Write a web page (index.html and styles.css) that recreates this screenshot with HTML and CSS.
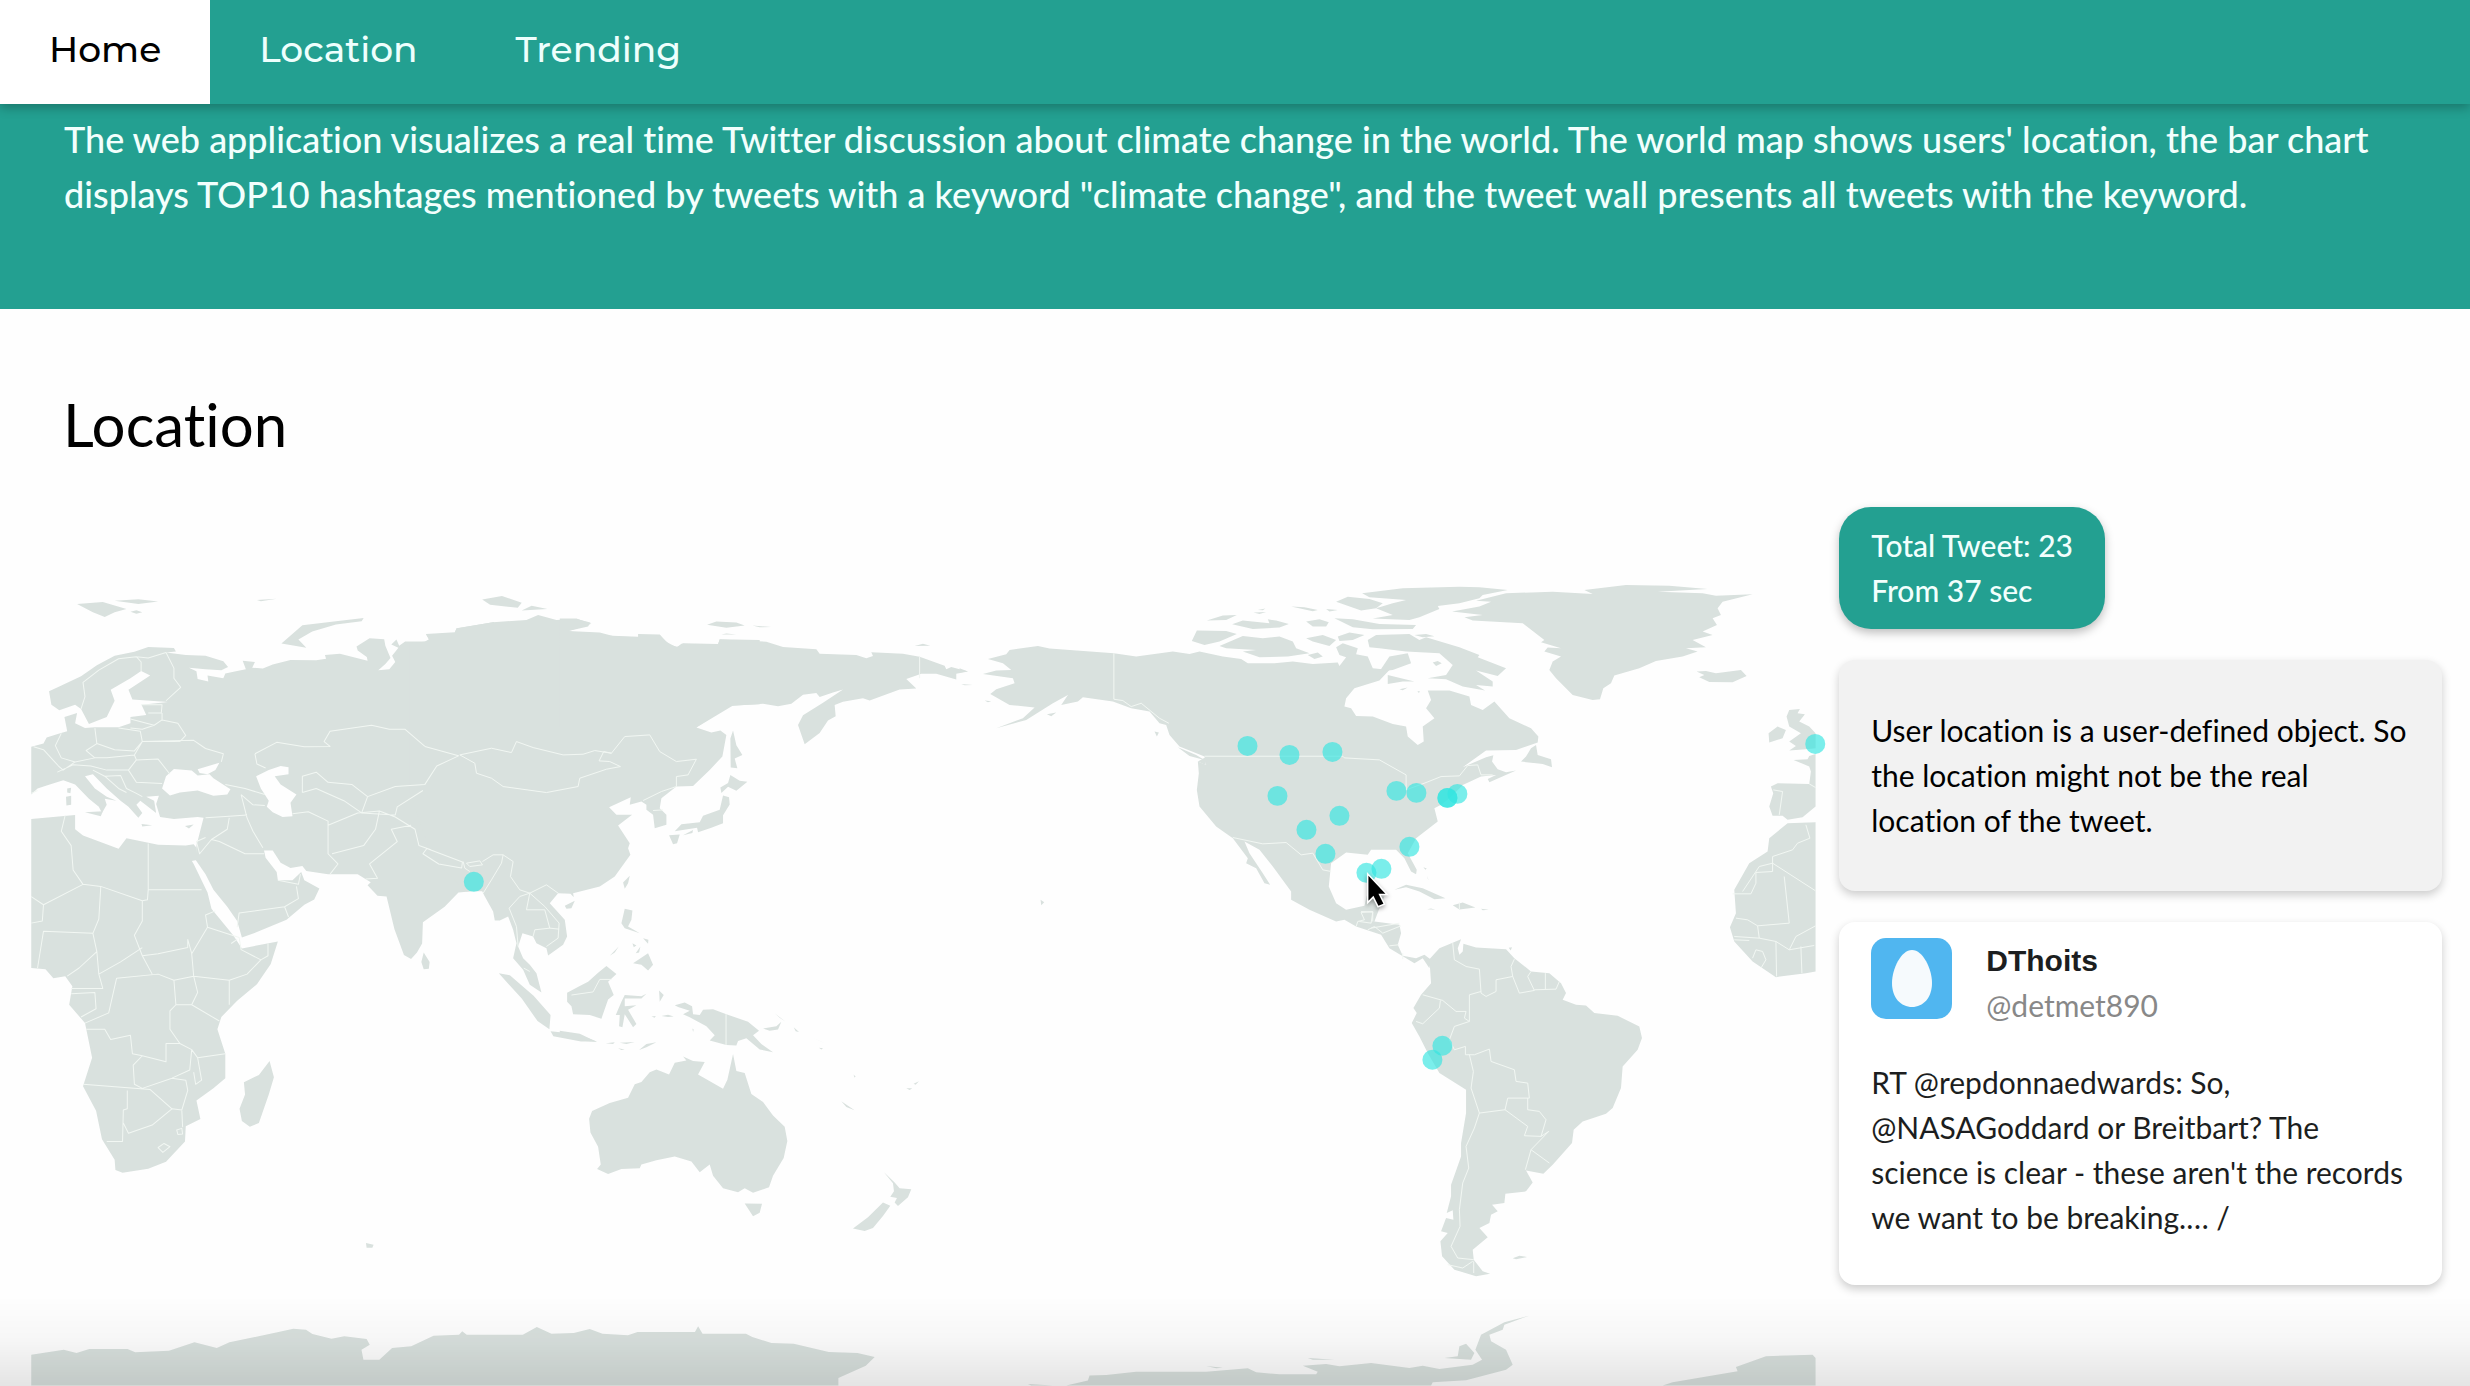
FILE: index.html
```html
<!DOCTYPE html>
<html lang="en">
<head>
<meta charset="utf-8">
<title>Climate change on Twitter</title>
<meta name="viewport" content="width=device-width, initial-scale=1">
<link rel="stylesheet" href="styles.css">
</head>
<body>
<nav class="nav">
  <a class="tab tab-active" href="#home">Home</a>
  <a class="tab" href="#location">Location</a>
  <a class="tab" href="#trending">Trending</a>
</nav>
<header class="hero" id="home">
  <p>The web application visualizes a real time Twitter discussion about climate change in the world. The world map shows users' location, the bar chart displays TOP10 hashtages mentioned by tweets with a keyword "climate change", and the tweet wall presents all tweets with the keyword.</p>
</header>
<main class="section" id="location">
  <h1>Location</h1>
  <div class="columns">
    <svg class="map" viewBox="31 507 1785 879" role="img" aria-label="World map of tweet locations">
      <g class="land">
        <!-- Europe, Africa, west Asia -->
        <g transform="translate(0 560) scale(.3954 .4082)">
          <path d="M124 322L150 310 205 285 245 258 290 235 340 225 375 213 440 216 445 224 420 227 470 233 520 235 565 248 577 262 560 270 520 268 478 264 497 273 500 292 527 298 525 283 565 290 570 278 600 272 622 268 614 247 645 250 638 264 665 266 690 256 735 245 800 246 825 242 822 233 860 230 930 247 928 238 905 222 902 212 935 192 972 194 975 210 988 240 975 255 957 270 985 268 1000 250 992 235 1008 215 990 207 1003 195 1010 210 1025 200 1075 200 1085 195 1078 182 1150 180 1155 168 1250 152V820L1225 822 1222 812 1195 812 1160 815 1125 850 1070 888 1068 940 1055 962 1040 978 1022 968 998 905 978 825 955 823 930 797 938 790 905 770 830 770 775 762 765 750 735 755 710 742 690 712 668 712 672 730 700 765 703 785 740 785 762 765 770 785 808 805 795 832 770 845 725 882 650 912 612 925 600 885 575 850 540 808 520 770 495 735 497 700 515 632 500 630 440 635 405 630 395 598 402 578 370 580 390 590 395 620 355 590 345 600 360 620 350 632 325 605 305 590 270 560 235 525 215 530 240 560 270 580 295 590 265 585 270 600 258 620 250 605 225 585 190 550 160 540 120 552 95 560 79 575V458L110 450 118 435 150 425 170 420 163 385 195 375 190 400 215 412 240 410 300 410 330 400 330 385 370 380 358 355 425 348 335 342 325 318 380 283 357 272 330 290 280 318 290 345 270 385 225 402 205 365 190 355 150 368 130 355Z"/>
          <path d="M79 635L190 625 190 660 210 675 300 708 320 682 400 698 470 700 490 697 497 705 497 735 485 738 470 712 490 745 525 815 535 855 590 920 612 952 703 935 685 990 650 1040 600 1080 560 1120 550 1150 570 1210 570 1270 540 1295 497 1325 507 1370 470 1388 468 1425 420 1475 375 1492 310 1502 292 1495 290 1470 258 1420 243 1350 210 1290 233 1220 215 1135 175 1090 183 1045 165 1020 135 1025 115 1003 79 1000Z"/>
          <path d="M682 1228L693 1268 680 1310 655 1380 632 1389 612 1375 606 1345 620 1310 617 1280 655 1262ZM712 205L765 160 850 150 920 142 915 150 850 158 790 175 755 195 775 215ZM195 108L260 103 320 120 290 128 265 140 235 128ZM290 100L350 96 400 102 350 108ZM330 127L345 123 360 128 345 132ZM650 98L700 95 660 101ZM1220 97L1270 88 1320 105 1310 117 1240 110ZM1320 124L1345 112 1385 120ZM1072 962L1087 985 1085 1002 1072 1003 1066 985ZM215 618L260 616 255 628ZM167 580L180 578 180 600 168 602ZM170 560L180 558 178 572 170 570ZM358 647L385 650 360 653ZM468 652L490 648 478 658Z"/>
          <path d="M1262 1013L1290 1018 1350 1068 1393 1115 1390 1150 1360 1130 1320 1075ZM1393 1155L1460 1162 1510 1180 1470 1180 1400 1167Z"/>
        </g>
        <!-- Central and south-east Asia -->
        <g transform="translate(300 560) scale(.33333)">
          <path d="M330 250L380 245 388 238 378 222 465 217 470 205 580 187 680 180 715 165 770 180 830 177 872 188 865 200 805 213 900 218 945 230 1015 232 1015 222 1080 224 1098 245 1130 262 1150 250 1255 252 1260 238 1380 240V433L1300 437 1190 503 1235 518 1262 512 1280 525 1268 590 1230 630 1180 678 1130 680 1085 715 1080 745 1100 765 1100 795 1065 805 1060 765 1040 750 1040 735 1025 725 990 735 993 712 928 742 950 765 997 765 955 797 990 850 985 865 992 885 945 950 900 980 820 1000 822 1012 812 1002 775 1000 750 1030 795 1080 802 1130 790 1155 745 1187 740 1165 710 1150 700 1130 668 1120 655 1160 670 1195 690 1215 710 1240 725 1298 690 1275 670 1230 640 1195 650 1150 640 1110 625 1070 600 1082 585 1082 580 1055 555 1010 545 990 500 995 400 900 330 700Z"/>
          <path d="M795 1038L825 1023 815 1045 800 1047ZM990 948L985 970 975 987 970 968ZM975 1047L998 1052 995 1080 985 1100 1020 1120 975 1105 965 1090ZM1000 1210L1045 1180 1060 1215 1045 1232 1025 1215ZM930 1188L957 1160 945 1178ZM1030 1135L1046 1140 1045 1152ZM998 1150L1010 1157 1002 1162ZM1008 1180L1022 1160 1018 1178Z"/>
        </g>
        <!-- East Asia and Oceania -->
        <g transform="translate(560 560) scale(.33333 .4464)">
          <path d="M0 131H50L95 143 25 160 100 168 235 172 300 168 330 190 355 195 365 188 475 190 480 178 620 183 670 195 770 200 780 210 890 213 920 220 940 215 935 207 1030 210 1080 217 1155 237 1160 245 1175 240 1225 250 1190 255 1190 268 1130 255 1085 255 1040 267 1070 288 1020 290 930 315 910 310 850 318 825 325 828 350 805 360 780 388 735 413 715 370 730 348 790 320 850 290 820 297 780 307 770 298 730 302 695 322 655 328 610 322 510 327 410 375H0Z"/>
          <path d="M520 382L530 415 548 437 525 445 533 467 513 465 512 400ZM512 482L540 495 563 497 530 517 505 508 485 522 482 510 505 500ZM490 528L508 532 510 548 490 572 490 590 455 600 415 610 412 600 345 608 365 592 420 588 430 573 480 560ZM328 617L360 615 352 635 340 637ZM370 617L400 605 398 612ZM442 145L470 138 530 140 555 147 500 152ZM578 147L635 150 600 151ZM485 167L530 167 500 165ZM1065 193L1090 188 1112 192ZM1205 278L1240 280 1215 281Z"/>
          <path d="M22 970L60 955 85 945 115 925 140 910 170 928 145 945 162 975 145 985 125 1028 90 1020 40 1018 35 1000 22 990ZM345 998L375 992 397 1000 400 1018 420 1020 430 1008 460 1007 500 1018 565 1035 598 1055 580 1065 605 1085 640 1103 600 1097 560 1072 535 1078 530 1088 500 1087 450 1077 465 1065 440 1045 390 1025 370 1018 390 1010 355 1002ZM610 1050L650 1045 665 1035 655 1052 630 1055ZM645 1016L678 1035 660 1026ZM185 990L195 975 245 978 260 972 245 983 195 983 195 1000 230 998 205 1008 230 1040 220 1047 195 1018 188 1047 178 1045 180 1020 168 1020ZM298 965L312 975 300 990ZM0 1055L60 1062 112 1080 60 1077 0 1068ZM138 1083L165 1081 160 1085ZM180 1082L225 1080 200 1085ZM238 1098L260 1085 290 1081 260 1092ZM175 1094L195 1097 185 1098ZM275 1023L288 1022 285 1026ZM305 1022L325 1019 342 1023 325 1024ZM398 1050L402 1052 400 1058ZM702 1047L718 1058 708 1056ZM758 1070L800 1085 780 1078ZM778 1093L790 1094 785 1097ZM845 1213L885 1233 860 1226ZM1040 1184L1058 1184 1050 1188ZM1062 1174L1078 1168 1068 1176ZM882 1153L888 1158 884 1160Z"/>
          <path d="M520 1107L530 1145 555 1150 575 1197 610 1215 640 1245 675 1270 683 1302 672 1340 640 1380 628 1406 580 1418 555 1408 535 1417 490 1408 460 1380 450 1355 420 1372 395 1348 345 1337 290 1345 245 1355 240 1363 185 1365 145 1376 112 1365 123 1355 115 1315 92 1283 88 1252 97 1235 150 1217 205 1205 225 1175 245 1170 270 1148 290 1142 328 1153 345 1127 380 1122 370 1113 400 1123 435 1125 415 1153 490 1185 503 1165ZM555 1442L607 1443 600 1463 580 1471ZM973 1372L1005 1395 1020 1408 1055 1410 1045 1428 1015 1448 1005 1440 1012 1430 992 1427 1003 1415 1000 1397ZM992 1447L970 1470 940 1497 915 1504 880 1498 925 1473 970 1440Z"/>
        </g>
        <!-- North America -->
        <g transform="translate(960 560) scale(.33333)">
          <path d="M85 297L140 283 150 270 235 258 270 266 463 280 530 290 640 275 690 282 720 275 790 290 845 297 865 310 945 310 1000 305 1060 312 1135 308 1140 318 1160 292 1140 285 1130 262 1150 250 1195 265 1190 283 1225 290 1240 325 1290 330 1260 362 1185 385 1160 415 1155 440 1175 445 1190 468 1240 470 1300 492 1340 500 1345 530 1375 555 1393 545 1390 500 1425 475 1400 445 1415 420 1405 392 1470 392 1530 410 1535 435 1570 450 1605 425 1650 475 1715 505 1737 530 1735 548 1670 570 1580 572 1510 622 1580 592 1602 586 1598 605 1615 628 1640 637 1670 632 1590 667 1585 657 1610 645 1565 650 1510 675 1470 715 1445 735 1425 745 1435 785 1370 835 1345 880 1372 930 1370 943 1355 935 1335 895 1310 870 1235 870 1225 885 1160 878 1115 910 1108 980 1130 1030 1160 1050 1215 1038 1222 1008 1275 1010 1262 1040 1245 1085 1320 1095 1325 1120 1315 1155 1330 1188 1370 1195 1395 1185 1415 1200 1410 1225 1390 1195 1365 1210 1290 1165 1265 1125 1190 1100 1155 1080 1130 1085 1050 1050 995 1020 995 995 940 920 900 870 855 845 870 880 910 940 932 975 915 970 890 925 860 910 865 895 820 835 770 800 720 740 712 690 718 640 715 605 740 615 735 590 660 560 630 525 620 495 600 490 570 455 515 445 460 425 370 412 355 425 305 435 325 405 280 430 200 480 110 505 190 475 225 443 150 435 92 402 110 388 165 370 160 355 70 342 110 332 155 330 130 310Z"/>
          <path d="M715 605L742 590 738 615ZM585 515L598 518 592 530ZM262 463L290 458 275 469ZM75 422L95 424 85 427ZM243 1020L254 1027 245 1036ZM0 325L25 335 0 338ZM655 562L710 585 735 600 690 588Z"/>
          <path d="M780 258L850 228 910 235 960 230 1000 245 1010 265 1050 280 985 290 900 292 850 275 890 270 800 265ZM712 212L800 213 832 222 780 245 735 255 697 243ZM742 182L790 167 832 165 800 180ZM818 193L850 182 930 190 925 178 950 182 988 192 960 203 880 207ZM882 158L920 156 900 162ZM895 150L918 146 910 151ZM995 140L1035 142 1075 150 1060 154ZM1040 185L1080 178 1108 187 1100 200 1060 200ZM1135 230L1170 218 1215 225 1180 240 1140 243ZM1040 235L1090 225 1130 240 1110 258 1060 245ZM1130 125L1165 110 1230 117 1270 130 1250 145 1205 152ZM1100 147L1135 150 1110 155ZM1125 175L1180 178 1260 192 1370 195 1360 207 1240 208 1180 202ZM1045 285L1075 278 1090 290 1065 297Z"/>
          <path d="M1208 100L1330 85 1500 80 1560 82 1645 90 1570 105 1560 115 1500 130 1435 138 1440 147 1380 172 1350 180 1240 176 1300 165 1250 145 1300 130 1340 120 1230 112ZM1290 290L1345 280 1355 310 1300 330 1260 335ZM1285 345L1365 365 1330 365 1285 372ZM1420 308L1435 303 1447 310 1430 318ZM1320 388L1345 383 1330 391ZM1374 393L1382 395 1378 399Z"/>
        </g>
        <!-- Baffin Island, Greenland and both shores of the Atlantic -->
        <g transform="translate(893.33 560) scale(.33333)">
          <path d="M1425 240L1450 225 1550 222 1580 240 1600 232 1700 262 1760 285 1755 292 1840 325 1815 348 1750 332 1800 365 1800 380 1750 375 1777 392 1710 380 1660 358 1605 355 1660 345 1680 315 1640 280 1540 275 1460 265 1430 262ZM1565 225L1600 222 1625 229 1590 232Z"/>
          <path d="M1678 155L1760 140 1795 125 1750 122 1840 100 1980 95 2100 102 2075 90 2200 75 2330 77 2445 87 2295 95 2430 100 2470 107 2580 103 2490 125 2475 145 2485 165 2460 175 2473 195 2430 215 2460 225 2400 240 2440 262 2380 265 2415 275 2370 290 2290 303 2240 325 2165 347 2155 370 2132 385 2122 418 2100 420 2040 405 1990 355 1970 330 1980 305 2005 290 1955 275 1965 263 2005 265 1945 247 1955 240 1890 190 1740 182 1715 172 1770 165ZM2412 335L2440 333 2470 340 2545 330 2562 348 2520 367 2450 366 2420 352 2435 345ZM1885 605L1900 590 1915 565 1930 555 1935 585 1975 598 1978 622 1950 612ZM1505 990L1540 975 1590 985 1658 1015 1625 1018 1580 995 1540 982ZM1680 1036L1710 1028 1748 1043 1700 1049ZM1603 1048L1615 1046 1628 1050ZM1765 1047L1788 1050 1770 1051ZM1592 922L1602 926 1598 930ZM1603 948L1608 962 1605 956Z"/>
          <path d="M2682 470L2690 450 2722 447 2715 460 2737 463 2720 485 2750 500 2769 520V565L2740 568 2690 572 2710 558 2690 545 2725 520 2690 500ZM2628 520L2655 500 2680 510 2670 535 2630 548ZM2769 582L2750 588 2745 598 2703 600 2750 620 2755 635 2750 672 2655 670 2635 680 2642 700 2630 740 2640 768 2670 768 2685 780 2730 772 2769 740ZM2769 787L2685 790 2630 835 2625 875 2570 910 2525 990 2530 1060 2512 1102 2525 1145 2580 1205 2650 1252 2740 1240 2769 1235Z"/>
        </g>
        <!-- South America and the Antarctic Peninsula -->
        <g transform="translate(1340 880) scale(.33333)">
          <path d="M270 238L300 205 365 178 355 205 360 225 370 215 372 192 410 203 500 208 525 235 575 275 630 280 665 310 680 340 670 360 710 375 740 377 765 400 835 408 900 440 908 475 895 510 850 560 845 625 820 685 800 702 730 725 703 750 698 790 640 855 612 882 560 872 580 908 560 935 498 942 495 970 458 975 475 995 455 1005 450 1030 420 1045 445 1073 400 1110 403 1140 430 1175 452 1182 410 1190 345 1170 308 1130 303 1085 325 1060 305 1055 320 1015 342 1020 340 992 322 1000 335 950 335 915 365 830 365 790 380 700 380 630 300 580 265 520 240 470 217 430 232 400 222 385 245 345 275 310ZM520 1136L540 1128 563 1132 530 1139ZM508 204L518 202 514 212Z"/>
          <path d="M-820 1518L-755 1503 -750 1488 -700 1486 -610 1476 -400 1476 -275 1466 -250 1478 -180 1484 -70 1484 -65 1476 -110 1458 -40 1453 0 1460 95 1450 210 1465 250 1458 300 1468 400 1455 428 1440 408 1410 425 1365 495 1328 570 1308 495 1335 490 1350 450 1365 455 1385 500 1410 520 1455 500 1470 380 1502 280 1508 275 1518ZM-95 1435L-15 1440 -80 1440ZM-400 1459L-350 1464 -370 1466ZM-935 1513L-860 1518H-925ZM315 1435L355 1430 360 1400 380 1392 405 1420 395 1440ZM970 1518L1000 1508 1195 1475 1190 1462 1280 1430 1420 1425 1429 1435V1518Z"/>
        </g>
        <!-- Antarctica -->
        <g transform="translate(0 1200) scale(.6378 .33333)">
          <path d="M49 465L100 450 120 460 140 448 200 448 212 458 265 453 305 428 340 445 360 428 435 398 460 387 480 390 490 403 520 417 540 410 575 418 580 435 567 450 570 480 595 480 615 445 645 440 680 408 720 405 725 395 732 405 820 405 842 382 865 402 900 400 925 388 945 402 985 407 1000 397 1090 397 1095 380 1102 402 1170 402 1180 412 1210 430 1245 432 1300 457 1345 460 1372 472 1358 498 1315 535V558H49ZM574 130L586 135 584 144 575 144Z"/>
        </g>
      </g>
      <!-- Inland seas -->
      <g class="sea" transform="translate(0 560) scale(.3954 .4082)">
        <path d="M410 560L420 530 440 512 485 516 500 528 530 525 540 535 583 562 575 575 540 578 500 565 455 570 430 577ZM500 513L555 497 545 515 525 525 505 522ZM648 530L680 515 710 505 730 508 730 525 695 530 710 550 750 575 735 595 740 628 715 630 690 618 675 605 680 590 660 560Z"/>
      </g>
      <g class="borders">
        <g transform="translate(0 560) scale(.3954 .4082)">
          <path d="M205 365L215 335 210 300 250 270 300 242 345 237 357 250V272M345 237L375 240 420 227 440 265 440 290 457 312 420 345M357 355L410 355 408 375 375 375M410 375V392L390 405 330 390M410 392L450 400 470 430 455 445 360 445 355 420 300 412M330 412L360 415 390 405M240 412L245 450 290 465 340 468 360 445M155 425L140 455 155 485 190 495 160 515 148 505 110 465 85 458M245 450L218 467 240 485 190 495M240 485L270 485 340 478 345 490 325 515 270 515 230 505 185 502 145 520M345 490L400 488 430 525M325 515L345 545 410 548M360 445L490 442 520 462 565 475 560 495M235 515L265 530 300 560 320 570M265 530L305 528 320 560 345 572 360 580M79 572L95 565M340 478L360 445M570 550L620 560 670 575M610 575L640 600 670 602M610 575L625 632 640 665 665 705M520 632L580 628 625 625M580 632L575 660 535 685 555 690 620 720 668 720M535 685L505 720 497 690 520 680M645 475L650 500 672 510M645 475L700 447 770 458 835 457 820 445 835 420 940 405 985 415 1025 415 1075 457M765 570V530L800 520 830 545 890 550 930 580M765 570L800 560 870 590 915 620M740 622L780 617 830 640 830 720 855 745 835 770M830 650L905 620 960 615 950 660 920 700 840 720"/>
          <path d="M1075 457L1160 480 1105 505 1075 550 1000 555 930 580 915 620 1000 625 1005 605 1070 565M960 615L1000 630 1050 660 1060 700 1090 710M1040 650L990 660 1005 690 935 745 955 780 925 782M1070 720L1080 707 1170 740 1168 755 1110 745ZM703 785L755 795 760 770M750 800L755 830 720 850 605 865 600 900M720 850L730 875M375 695V808H510M375 808L373 833 360 835V885L340 920 360 970 385 1015M79 825L110 845 210 795 185 760 180 700 155 665 165 625M210 795L255 800 360 835M110 845L107 885 79 890M255 800L250 880 235 915 110 910 95 1000M235 915L245 960 250 1015 305 985 360 950M245 960L200 1000 170 1020M250 1015L260 1050 180 1050M180 1063L240 1060 243 1100 205 1120M295 1025L275 1110 215 1135M295 1025L400 1015 440 1030 445 1090 430 1105 430 1150 455 1185 420 1185 420 1230 360 1215 335 1210 330 1165 280 1175 265 1150 218 1150M360 970L400 965 475 950 475 930 485 965 490 1020 440 1030M490 1020L500 1060 485 1090 445 1090M485 1090L555 1130M490 1020L580 1030 625 1015 660 980M580 1030V1090M525 900L520 870 545 860M525 900L485 965M525 900L605 925 610 955 660 980 678 970 678 940M600 930L585 940M455 1185L485 1200 500 1220 570 1210M360 1215L337 1238 340 1285 360 1295 435 1270 480 1250 485 1200M500 1220L510 1275 495 1285 490 1255M210 1285L380 1298 435 1345 460 1348 475 1300 470 1275 435 1270M322 1300V1345L312 1348 310 1425 270 1425M312 1380L325 1405 385 1385 435 1345M460 1350L462 1390M400 1440L415 1430 430 1438 412 1452ZM447 1397L460 1393 462 1407 450 1408Z"/>
        </g>
        <g transform="translate(300 560) scale(.33333)">
          <path d="M480 585L575 565 635 578 650 545 700 563 790 585 850 583 885 572 935 580 975 530 1050 525 1080 575 1130 605 1190 598 1165 645 1130 650V680M935 580L912 575 898 603 930 605 962 620 920 628 840 655 835 680 740 698 610 680 575 655 530 640 525 610 480 585M1130 680L1085 695 1030 722M1060 752L1090 750M490 905L495 925 510 935M500 910L540 903 548 915 510 920 500 910M548 905L580 885 610 885 605 910 575 960 550 1000M610 885L640 905 632 950 660 990 690 1000 740 975 775 1000M690 1000L660 1010 628 1045 650 1100 655 1160M690 1000L680 1050 735 1050 750 1105 705 1110 700 1130M690 1000L735 1040 778 1090 775 1135 740 1160M750 1105L778 1108M672 1225L690 1235"/>
        </g>
        <g transform="translate(560 560) scale(.33333 .4464)">
          <path d="M1080 215V265M499 1018V1087M35 975L100 968 120 940 155 940"/>
        </g>
        <g transform="translate(960 560) scale(.33333)">
          <path d="M463 280V418L490 422 515 440 545 430 600 475 628 490M735 589H1150L1155 594 1260 600 1340 645V690L1400 668 1445 650 1500 648 1525 617 1555 615 1565 645 1600 645M820 833L910 852 980 848 1025 885 1060 880 1090 930 1115 935M1240 1055L1205 1058 1215 1080 1195 1085 1190 1100M1240 1055V1085M1225 1110L1245 1100 1270 1120 1325 1098M1290 1158L1318 1155M1330 1180V1198"/>
        </g>
        <g transform="translate(893.33 560) scale(.33333)">
          <path d="M2642 690L2670 695 2660 765M2750 672L2769 683M2740 795L2752 835 2715 850 2700 870 2640 890V935L2590 938V970L2575 1002H2520M2640 910L2769 993M2640 910L2600 920 2550 995M2675 950L2690 1090 2595 1098 2565 1080 2530 1075M2595 1098L2600 1135 2650 1145 2690 1170 2710 1130 2769 1098M2690 1170L2765 1157M2725 1160L2728 1240M2650 1145L2652 1250M2600 1135L2525 1130M2580 1195L2590 1170 2610 1175 2620 1200 2605 1225M2525 1140L2570 1142M1700 1028V1048"/>
        </g>
        <g transform="translate(1340 880) scale(.33333)">
          <path d="M340 190L345 240 380 260 420 268 425 340 440 350 470 335 470 300 520 290 515 260 525 238M425 335L390 345 390 425 375 415 380 395 350 395 310 362 250 345M303 362L300 385 250 432 230 425M390 425L345 440 330 480 345 510 378 500 378 525 405 525 450 508 455 545 525 570 530 605 565 610 570 655 505 655 497 690 420 700 395 625 402 575 390 525M520 290L540 340 585 332 565 290 575 275M585 330L650 328 660 305M618 280L618 328M497 690L565 740 555 768 605 770 620 720 600 695 565 690 565 655M605 770L628 755 575 810 630 850M575 810L558 870M420 700L405 745 380 800 388 865 370 910 360 990 362 1040 335 1100 355 1135 403 1140M325 1155L370 1165 400 1145M403 1145V1180M65 95L100 97 95 130 60 125M95 145L180 130"/>
        </g>
      </g>
      <g class="tweets">
        <circle cx="474" cy="882" r="10"/>
        <circle cx="1248" cy="746" r="10"/>
        <circle cx="1290" cy="755" r="10"/>
        <circle cx="1333" cy="752" r="10"/>
        <circle cx="1278" cy="796" r="10"/>
        <circle cx="1307" cy="830" r="10"/>
        <circle cx="1340" cy="816" r="10"/>
        <circle cx="1326" cy="854" r="10"/>
        <circle cx="1397" cy="791" r="10"/>
        <circle cx="1417" cy="793" r="10"/>
        <circle cx="1458" cy="794" r="10"/>
        <circle cx="1448" cy="798" r="10"/>
        <circle cx="1448" cy="798" r="10"/>
        <circle cx="1410" cy="847" r="10"/>
        <circle cx="1367" cy="873" r="10"/>
        <circle cx="1382" cy="869" r="10"/>
        <circle cx="1816" cy="744" r="10"/>
        <circle cx="1443" cy="1046" r="10"/>
        <circle cx="1433" cy="1060" r="10"/>
      </g>
      <path class="pointer" d="M1369 876V901L1374 896 1379 906 1384 904 1379 894H1386Z"/>
    </svg>
    <aside class="side">
      <div class="badge">Total Tweet: 23<br>From 37 sec</div>
      <p class="card note">User location is a user-defined object. So the location might not be the real location of the tweet.</p>
      <article class="card tweet">
        <div class="author">
          <svg class="avatar" viewBox="0 0 81 81" aria-hidden="true">
            <rect width="81" height="81" rx="15" fill="#50b6f0"/>
            <path d="M41 12C52 12 61 31 61 45C61 60 52 69 41 69S21 60 21 45C21 31 30 12 41 12Z" fill="#f6fafd"/>
          </svg>
          <div>
            <strong class="name">DThoits</strong>
            <span class="handle">@detmet890</span>
          </div>
        </div>
        <p class="message">RT @repdonnaedwards: So, @NASAGoddard or Breitbart? The science is clear - these aren't the records we want to be breaking.… /</p>
      </article>
    </aside>
  </div>
</main>
<div class="fade"></div>
</body>
</html>
```
FILE: styles.css
```css
* {
  box-sizing: border-box;
}

body {
  margin: 0;
  background: #fefefe;
  color: #000;
  font: 400 30px/45px Lato, "Noto Sans", sans-serif;
  font-variant-ligatures: no-common-ligatures;
}

h1,
p {
  margin: 0;
}

.nav {
  position: relative;
  display: flex;
  height: 104px;
  background: #23a091;
  box-shadow: 0 4px 10px rgba(0, 0, 0, .25);
}

.tab {
  padding: 0 49px;
  color: #eefffd;
  font: 500 36px/98px Montserrat, Inter, sans-serif;
  text-decoration: none;
}

.tab-active {
  background: #fff;
  color: #000;
}

.hero {
  padding: 8px 64px 87px;
  background: #23a091;
  color: #f2fffd;
  font-size: 36px;
  font-weight: 500;
  line-height: 55px;
}

.section {
  padding: 70px 28px 0 31px;
}

h1 {
  padding-left: 32px;
  font-size: 60px;
  font-weight: 400;
  line-height: 90px;
}

.columns {
  display: grid;
  grid-template-columns: minmax(0, 1785fr) minmax(0, 603fr);
  gap: 24px;
  align-items: start;
  margin-top: 38px;
}

.map {
  display: block;
  width: 100%;
  overflow: visible;
}

.land {
  fill: #d9e1de;
}

.sea {
  fill: #fefefe;
}

.borders path {
  fill: none;
  stroke: #f2f7f3;
  stroke-width: 1px;
  stroke-linejoin: round;
  vector-effect: non-scaling-stroke;
}

.tweets {
  fill: #32e5e0;
  fill-opacity: .65;
}

.pointer {
  fill: #000;
  stroke: #fff;
  stroke-width: 3px;
  paint-order: stroke;
  filter: drop-shadow(0 2px 2px rgba(0, 0, 0, .35));
}

.side {
  display: flex;
  flex-direction: column;
  gap: 31px;
}

.badge {
  align-self: flex-start;
  padding: 16px 32px;
  border-radius: 32px;
  background: #23a091;
  box-shadow: 0 4px 10px rgba(0, 0, 0, .25);
  color: #f2fffd;
  font-weight: 500;
}

.card {
  padding: 48px 24px 48px 32px;
  border-radius: 16px;
  box-shadow: 0 4px 10px rgba(0, 0, 0, .2);
}

.note {
  background: #f2f2f2;
}

.tweet {
  padding: 16px 24px 45px 32px;
  background: #fff;
  color: #1c1e20;
}

.author {
  display: flex;
  gap: 34px;
}

.avatar {
  flex: none;
  width: 81px;
  height: 81px;
}

.name,
.handle {
  display: block;
}

.name {
  font-family: "Liberation Sans", Arial, sans-serif;
}

.handle {
  color: #888;
}

.message {
  margin-top: 32px;
}

.fade {
  position: fixed;
  inset: auto 0 0;
  height: 90px;
  background: linear-gradient(rgba(0, 0, 0, 0), rgba(0, 0, 0, .03) 50%, rgba(0, 0, 0, .1));
  pointer-events: none;
}
```
